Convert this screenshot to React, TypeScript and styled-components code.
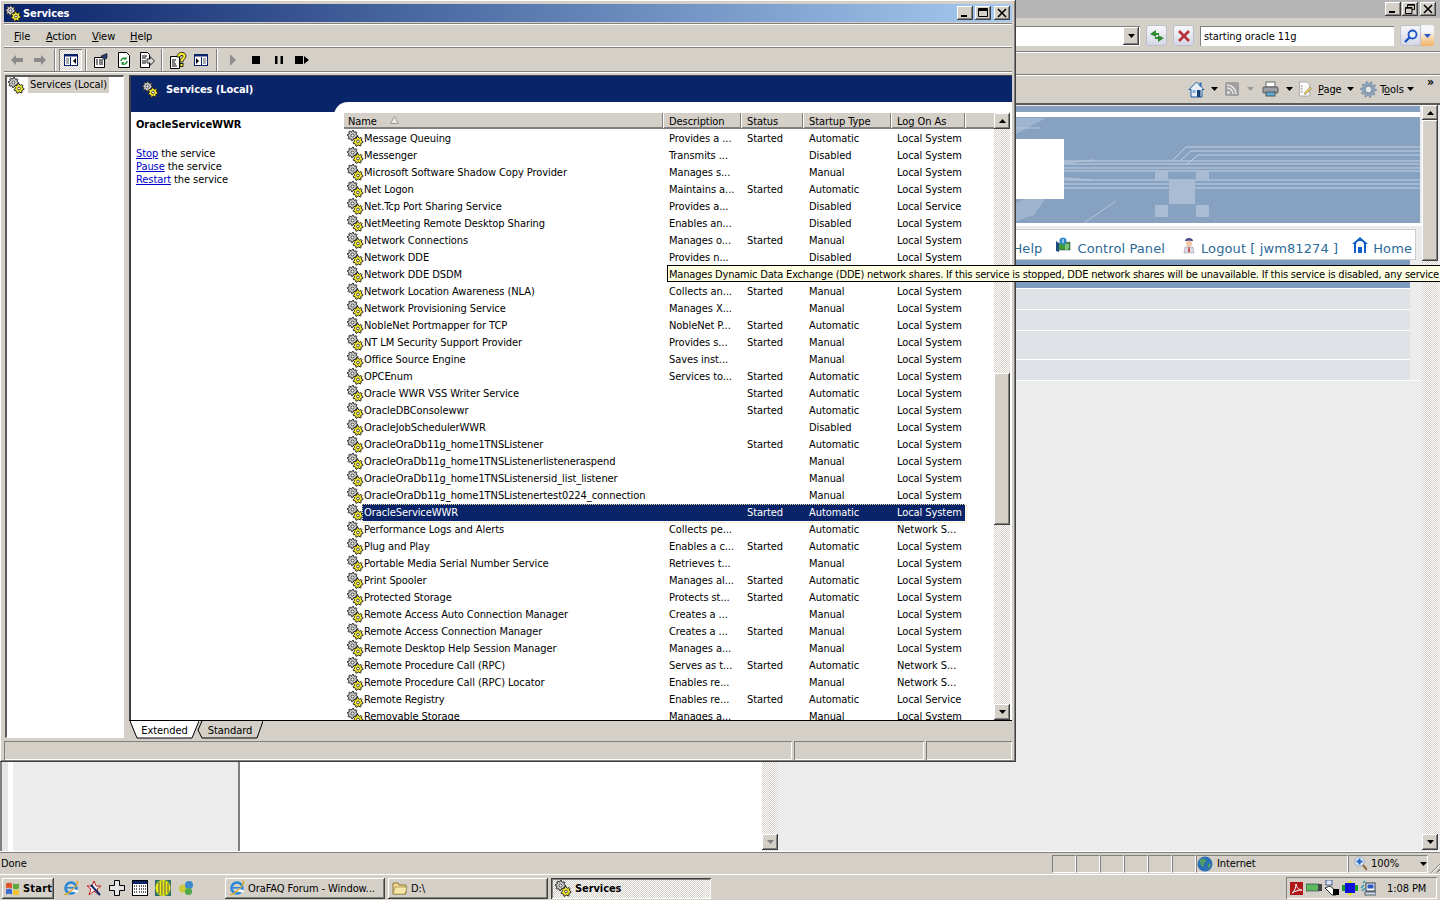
import React from 'react';
import styled, { createGlobalStyle, css } from 'styled-components';

const Global = createGlobalStyle`
  html, body { margin: 0; padding: 0; width: 1440px; height: 900px; overflow: hidden; background: #d4d0c8; }
  * { box-sizing: border-box; }
  #root { width: 1440px; height: 900px; }
`;

const raised = css`
  background-color: #d4d0c8;
  box-shadow: inset -1px -1px #404040, inset 1px 1px #fff, inset -2px -2px #808080, inset 2px 2px #d4d0c8;
`;
const sunken = css`
  box-shadow: inset 1px 1px #808080, inset -1px -1px #fff;
`;
const hatch = css`
  background: repeating-conic-gradient(#fff 0 25%, #d4d0c8 0 50%) 0 0 / 2px 2px;
`;

const Desktop = styled.div`
  position: relative;
  width: 1440px;
  height: 900px;
  overflow: hidden;
  display: flex;
  flex-direction: column;
  background: #d4d0c8;
  color: #000;
  font: 11px/13px "DejaVu Sans Condensed", "Noto Sans", sans-serif;
  letter-spacing: -0.08px;
`;

/* ---------- Background browser window ---------- */
const Browser = styled.div`
  flex: 1;
  min-height: 0;
  display: flex;
  flex-direction: column;
`;
const BrowserTitle = styled.div`
  height: 18px;
  flex: none;
  background: #b5b5b5;
  display: flex;
  justify-content: flex-end;
  align-items: center;
  gap: 1px;
  padding: 0 4px 1px 0;
`;
const CaptionButton = styled.div<{ $gap?: number }>`
  ${raised}
  width: 16px;
  height: 14px;
  margin-left: ${p => p.$gap ?? 0}px;
  display: flex;
  align-items: center;
  justify-content: center;
  flex: none;
`;
const AddressRow = styled.div`
  height: 34px;
  flex: none;
  display: flex;
  align-items: center;
  padding: 2px 6px 0 0;
  border-bottom: 1px solid #808080;
  box-shadow: 0 1px #fff;
`;
const AddressCombo = styled.div`
  flex: 1;
  height: 20px;
  background: #fff;
  display: flex;
  justify-content: flex-end;
  align-items: center;
  padding-right: 1px;
  ${sunken}
`;
const ComboButton = styled.div`
  ${raised}
  width: 16px;
  height: 18px;
  display: flex;
  align-items: center;
  justify-content: center;
`;
const RoundTool = styled.div`
  width: 21px;
  height: 21px;
  margin-left: 6px;
  border-radius: 3px;
  border: 1px solid #bcc0cc;
  background: linear-gradient(#f6f7fa, #d5d8e4);
  display: flex;
  align-items: center;
  justify-content: center;
  flex: none;
`;
const SearchBox = styled.div`
  width: 194px;
  height: 20px;
  margin-left: 6px;
  margin-right: 6px;
  background: #fff;
  padding: 4px 4px;
  ${sunken}
`;
const SearchArrow = styled.div`
  width: 13px;
  height: 21px;
  background: linear-gradient(#f6f7fa 30%, #f3b25e);
  display: flex;
  align-items: center;
  justify-content: center;
  border-radius: 0 3px 3px 0;
`;
const SearchGo = styled(RoundTool)`
  margin-left: 0;
  border-radius: 3px 0 0 3px;
`;
const MenuStrip = styled.div`
  height: 23px;
  flex: none;
  border-bottom: 1px solid #808080;
  box-shadow: 0 1px #fff;
`;
const CommandRow = styled.div`
  height: 30px;
  flex: none;
  display: flex;
  justify-content: flex-end;
  align-items: center;
  padding: 0 5px 0 0;
  border-bottom: 2px solid #5a5a5a;
`;
const CommandItem = styled.div<{ $w: number; $gap?: number }>`
  width: ${p => p.$w}px;
  display: flex;
  align-items: center;
  gap: ${p => p.$gap ?? 5}px;
  flex: none;
`;
const CmdText = styled.span`
  & u { text-decoration: underline; }
`;
const Chevrons = styled.div`
  width: 17px;
  padding-left: 9px;
  align-self: flex-start;
  font-weight: 700;
  font-size: 12px;
  line-height: 14px;
`;
const BrowserContent = styled.div`
  flex: 1;
  min-height: 0;
  display: flex;
  background: #ececec;
`;
const Page = styled.div`
  flex: 1;
  min-width: 0;
  display: flex;
  flex-direction: column;
  padding-top: 1px;
  background: #ececec;
`;
const Banner = styled.div`
  height: 117px;
  flex: none;
  border-bottom: 3px solid #fff;
  box-sizing: content-box;
  line-height: 0;
`;
const NavPanel = styled.div`
  margin: 3px 6px 0 0;
  height: 31px;
  flex: none;
  background: #fff;
  border: 1px solid #ccc;
  display: flex;
  justify-content: flex-end;
  align-items: center;
  padding: 9px 3px 0 0;
  font: 13px/16px "DejaVu Sans", Verdana, sans-serif;
  color: #2c6a98;
  letter-spacing: 0.1px;
`;
const NavLink = styled.div<{ $gap: number }>`
  display: flex;
  align-items: center;
  gap: 5px;
  margin-left: ${p => p.$gap}px;
  white-space: nowrap;
  & svg { margin-top: -8px; }
`;
const Band = styled.div`
  height: 28px;
  flex: none;
  margin: 0 12px 0 0;
  background: #7f9cc0;
`;
const Stripe = styled.div<{ $h: number }>`
  height: ${p => p.$h}px;
  flex: none;
  margin: 0 12px 0 0;
  background: #dee1e5;
  border-top: 1px solid #fff;
`;
const Lower = styled.div`
  flex: 1;
  min-height: 0;
  display: flex;
  border-top: 1px solid #fff;
`;
const LowerGutter = styled.div`
  width: 13px;
  flex: none;
  background: linear-gradient(90deg, #808080 0 2px, #e6e6e6 2px 8px, #fff 8px);
`;
const LowerSide = styled.div`
  width: 225px;
  flex: none;
  background: #ececec;
  border-right: 2px solid #808080;
  box-sizing: content-box;
`;
const LowerMain = styled.div`
  width: 538px;
  flex: none;
  display: flex;
  background: #fff;
`;
const LowerBlank = styled.div`
  flex: 1;
`;
const ScrollColumn = styled.div<{ $w: number }>`
  width: ${p => p.$w}px;
  flex: none;
  display: flex;
  flex-direction: column;
`;
const ScrollGap = styled.div<{ $h?: number }>`
  ${hatch}
  ${p => (p.$h ? `height:${p.$h}px; flex:none;` : 'flex:1;')}
`;
const ScrollButton = styled.div<{ $h?: number }>`
  ${raised}
  height: ${p => p.$h ?? 16}px;
  flex: none;
  display: flex;
  align-items: center;
  justify-content: center;
`;
const ScrollThumb = styled.div<{ $h: number }>`
  ${raised}
  height: ${p => p.$h}px;
  flex: none;
`;
const RightEdge = styled.div`
  width: 2px;
  flex: none;
  background: #ececec;
`;
const BrowserStatus = styled.div`
  height: 22px;
  flex: none;
  display: flex;
  align-items: center;
  padding: 0 0 0 1px;
  border-top: 1px solid #808080;
  box-shadow: 0 -1px #fff, 0 1px #fff;
`;
const StatusDone = styled.div`
  flex: 1;
`;
const StatusCell = styled.div<{ $w: number }>`
  width: ${p => p.$w}px;
  height: 18px;
  flex: none;
  display: flex;
  align-items: center;
  gap: 4px;
  border-left: 1px solid #808080;
  border-top: 1px solid #808080;
  border-right: 1px solid #fff;
  border-bottom: 1px solid #fff;
  white-space: nowrap;
`;
const ZoomCell = styled(StatusCell)`
  padding-left: 5px;
`;
const ZoomValue = styled.span`
  width: 46px;
`;
const Grip = styled.div`
  width: 12px;
  height: 12px;
  flex: none;
  margin-top: 6px;
  background: repeating-linear-gradient(135deg, transparent 0 2px, #808080 2px 3px, #fff 3px 4px);
  clip-path: polygon(100% 0, 100% 100%, 0 100%);
`;

/* ---------- Task bar ---------- */
const TaskBar = styled.div`
  height: 26px;
  flex: none;
  display: flex;
  align-items: center;
  padding: 1px 3px 0 2px;
  border-top: 1px solid #fff;
`;
const StartButton = styled.div`
  ${raised}
  width: 52px;
  height: 21px;
  flex: none;
  display: flex;
  align-items: center;
  gap: 3px;
  padding-left: 3px;
  font-weight: 700;
  font-size: 11px;
  letter-spacing: 0.2px;
`;
const QuickLaunch = styled.div`
  display: flex;
  align-items: center;
  gap: 7px;
  margin-left: 9px;
  width: 162px;
  flex: none;
`;
const TaskButton = styled.div<{ $active?: boolean; $w: number }>`
  width: ${p => p.$w}px;
  height: 21px;
  flex: none;
  margin-right: 3px;
  display: flex;
  align-items: center;
  gap: 3px;
  padding-left: 4px;
  white-space: nowrap;
  overflow: hidden;
  ${p =>
    p.$active
      ? css`
          ${hatch}
          font-weight: 700;
          box-shadow: inset 1px 1px #404040, inset -1px -1px #fff, inset 2px 2px #808080;
        `
      : raised}
`;
const TaskSpacer = styled.div`
  flex: 1;
`;
const Tray = styled.div`
  width: 151px;
  height: 22px;
  flex: none;
  display: flex;
  align-items: center;
  gap: 2px;
  padding-left: 4px;
  ${sunken}
`;
const Clock = styled.div`
  margin-left: 9px;
  white-space: nowrap;
`;

/* ---------- Services window ---------- */
const Win = styled.div`
  position: absolute;
  left: 0;
  top: 0;
  width: 1016px;
  height: 762px;
  z-index: 2;
  display: flex;
  flex-direction: column;
  padding: 4px 4px 2px 4px;
  background: #d4d0c8;
  box-shadow: inset -1px -1px #404040, inset 1px 1px #fff, inset -2px -2px #808080;
`;
const WinTitle = styled.div`
  height: 18px;
  flex: none;
  background: linear-gradient(90deg, #0a246a, #a6caf0);
  color: #fff;
  font-weight: 700;
  display: flex;
  align-items: center;
  gap: 1px;
  padding: 0 2px 0 1px;
`;
const WinTitleText = styled.div`
  flex: 1;
`;
const WinMenu = styled.div`
  height: 25px;
  flex: none;
  margin-top: 1px;
  display: flex;
  align-items: center;
  gap: 13px;
  padding: 1px 0 0 10px;
  border-top: 1px solid #808080;
  border-bottom: 1px solid #808080;
  box-shadow: inset 0 1px #fff, inset 0 -1px #fff;
`;
const MenuItem = styled.div<{ $w: number }>`
  width: ${p => p.$w}px;
  & u { text-decoration: underline; }
`;
const WinTools = styled.div`
  height: 24px;
  flex: none;
  display: flex;
  align-items: center;
  padding-left: 1px;
  border-bottom: 1px solid #808080;
  box-shadow: 0 1px #fff;
`;
const ToolButton = styled.div<{ $pressed?: boolean }>`
  width: 23px;
  height: 22px;
  flex: none;
  display: flex;
  align-items: center;
  justify-content: center;
  ${p =>
    p.$pressed &&
    css`
      ${hatch}
      box-shadow: inset 1px 1px #808080, inset -1px -1px #fff;
    `}
`;
const ToolSep = styled.div<{ $w?: number }>`
  width: ${p => p.$w ?? 8}px;
  height: 22px;
  flex: none;
  display: flex;
  justify-content: center;
  &::before {
    content: '';
    width: 2px;
    background: linear-gradient(90deg, #808080 50%, #fff 50%);
  }
`;
const WinBody = styled.div`
  flex: 1;
  min-height: 0;
  display: flex;
  gap: 5px;
  padding: 3px 0 1px 1px;
`;
const TreePane = styled.div`
  width: 119px;
  flex: none;
  background: #fff;
  margin-bottom: 2px;
  border-top: 2px solid #5a5a5a;
  border-left: 2px solid #5a5a5a;
  border-right: 1px solid #fff;
  border-bottom: 1px solid #fff;
  padding: 0 1px;
`;
const TreeItem = styled.div`
  display: flex;
  align-items: center;
  height: 16px;
`;
const TreeLabel = styled.span`
  background: #d4d0c8;
  padding: 0 2px;
  margin-left: 3px;
  line-height: 16px;
  white-space: nowrap;
`;
const RightPane = styled.div`
  flex: 1;
  min-width: 0;
  display: flex;
  flex-direction: column;
  background: #fff;
`;
const ViewArea = styled.div`
  flex: 1;
  min-height: 0;
  display: flex;
  flex-direction: column;
  border-top: 1px solid #404040;
  border-left: 2px solid #404040;
`;
const ViewHeading = styled.div`
  height: 36px;
  flex: none;
  background: #0a246a;
  color: #fff;
  font-weight: 700;
  font-size: 11px;
  line-height: 17px;
  display: flex;
  align-items: flex-start;
  gap: 7px;
  padding: 5px 0 0 11px;
`;
const ViewColumns = styled.div`
  flex: 1;
  min-height: 0;
  display: flex;
`;
const DetailPane = styled.div`
  width: 203px;
  flex: none;
  padding: 6px 5px 0;
`;
const DetailName = styled.div`
  font-weight: 700;
  font-size: 11px;
  margin-bottom: 16px;
`;
const DetailLine = styled.div`
  height: 13px;
`;
const DetailLink = styled.a`
  color: #0000cc;
  text-decoration: underline;
`;
const ListPane = styled.div`
  flex: 1;
  min-width: 0;
  position: relative;
  margin-top: -10px;
  border-radius: 14px 0 0 0;
  background: #fff;
  display: flex;
  padding: 11px 2px 0 10px;
`;
const ListMain = styled.div`
  flex: 1;
  min-width: 0;
  display: flex;
  flex-direction: column;
`;
const columns = css`
  display: grid;
  grid-template-columns: 319px 78px 62px 88px 74px;
`;
const ListHeader = styled.div`
  ${columns}
  height: 16px;
  flex: none;
  background: #d4d0c8;
  border-bottom: 2px solid #808080;
`;
const HeadCell = styled.div`
  padding: 2px 0 0 6px;
  position: relative;
  white-space: nowrap;
  border-right: 1px solid #808080;
  box-shadow: 1px 0 #fff;
`;
const NameHead = styled(HeadCell)`
  padding-left: 4px;
  display: flex;
  align-items: flex-start;
  gap: 13px;
`;
const SortMark = styled.svg`
  margin-top: 1px;
`;
const ListRows = styled.div`
  flex: 1;
  min-height: 0;
  overflow: hidden;
  padding-top: 1px;
`;
const Row = styled.div<{ $selected?: boolean }>`
  ${columns}
  position: relative;
  height: 17px;
  align-items: center;
  ${p =>
    p.$selected &&
    css`
      &::after {
        content: '';
        position: absolute;
        left: 18px;
        top: 0;
        width: 603px;
        height: 17px;
        border: 1px dotted #e6d89a;
      }
    `}
`;
const NameCell = styled.div`
  display: flex;
  align-items: center;
  padding-left: 3px;
  white-space: nowrap;
  height: 17px;
  & svg { margin-right: -2px; }
`;
const NameText = styled.span<{ $selected?: boolean }>`
  flex: 1;
  height: 17px;
  line-height: 17px;
  padding-left: 2px;
  ${p => p.$selected && 'background:#0a246a;color:#fff;'}
`;
const Cell = styled.div<{ $selected?: boolean }>`
  padding-left: 6px;
  height: 17px;
  line-height: 17px;
  white-space: nowrap;
  overflow: hidden;
  ${p => p.$selected && 'background:#0a246a;color:#fff;'}
`;
const TabStrip = styled.div`
  height: 20px;
  flex: none;
  background: #d4d0c8;
  border-top: 1px solid #000;
  display: flex;
  padding-left: 1px;
`;
const Tab = styled.div<{ $w: number; $shift?: number }>`
  position: relative;
  width: ${p => p.$w}px;
  height: 18px;
  flex: none;
  margin-left: ${p => p.$shift ?? 0}px;
  text-align: center;
  line-height: 19px;
`;
const TabShape = styled.svg`
  position: absolute;
  inset: 0;
`;
const TabLabel = styled.span`
  position: relative;
`;
const WinStatus = styled.div`
  height: 19px;
  flex: none;
  display: flex;
  gap: 2px;
`;
const WinStatusCell = styled.div<{ $w?: number }>`
  ${p => (p.$w ? `width:${p.$w}px;flex:none;` : 'flex:1;')}
  ${sunken}
`;
const Tip = styled.div`
  position: absolute;
  left: 667px;
  top: 265px;
  height: 17px;
  z-index: 5;
  width: 800px;
  padding: 2px 1px 0;
  background: #ffffe1;
  border: 1px solid #000;
  white-space: nowrap;
  line-height: 13px;
  letter-spacing: -0.195px;
`;

/* ---------- Icons ---------- */
const gear = (cx: number, cy: number, r: number, teeth: number) => {
  const pts: string[] = [];
  const n = teeth * 4;
  for (let i = 0; i < n; i++) {
    const a = (i / n) * Math.PI * 2;
    const rr = i % 4 < 2 ? r : r * 0.72;
    pts.push(`${(cx + rr * Math.cos(a)).toFixed(2)},${(cy + rr * Math.sin(a)).toFixed(2)}`);
  }
  return pts.join(' ');
};
const GearIcon = () => (
  <svg width="17" height="17" viewBox="0 0 17 17" style={{ flex: 'none' }}>
    <polygon points={gear(5.5, 5.5, 5.2, 8)} fill="#d0d0d0" stroke="#222" strokeWidth="1" />
    <circle cx="5.5" cy="5.5" r="1.5" fill="#fff" stroke="#222" strokeWidth=".8" />
    <polygon points={gear(11, 11.5, 5, 7)} fill="#f6ea2c" stroke="#222" strokeWidth="1" />
    <circle cx="11" cy="11.5" r="1.4" fill="#fff" stroke="#222" strokeWidth=".8" />
  </svg>
);
const IEIcon = ({ s = 16 }: { s?: number }) => (
  <svg width={s} height={s} viewBox="0 0 16 16" style={{ flex: 'none' }}>
    <circle cx="8" cy="8" r="5.5" fill="none" stroke="#2a86d8" strokeWidth="2.6" />
    <rect x="4" y="7" width="8.5" height="1.6" fill="#2a86d8" />
    <rect x="10" y="9.2" width="5" height="2.6" fill="#fff" transform="rotate(10 10 9)" />
    <path d="M1 14c1 2 7-2 11-7s3-6 1-6" fill="none" stroke="#e0a820" strokeWidth="1.2" />
  </svg>
);
const Caret = ({ dir = 'down', c = '#000' }: { dir?: 'up' | 'down'; c?: string }) => (
  <svg width="7" height="4" viewBox="0 0 7 4" style={{ flex: 'none' }}>
    <path d={dir === 'down' ? 'M0 0h7L3.5 4z' : 'M0 4h7L3.5 0z'} fill={c} />
  </svg>
);
const Min = () => (
  <svg width="10" height="10" viewBox="0 0 10 10"><rect x="1" y="7" width="6" height="2" /></svg>
);
const Max = () => (
  <svg width="10" height="10" viewBox="0 0 10 10"><path d="M.5 1.5h9v7h-9zM.5 .5h9v2h-9z" fill="none" stroke="#000" /></svg>
);
const Restore = () => (
  <svg width="10" height="10" viewBox="0 0 10 10"><path d="M2.5 3V.5h7v5H7M.5 3.5h6.5v6H.5z M2.5 1.2h7M.5 4.2h6.5" fill="none" stroke="#000" /></svg>
);
const Close = () => (
  <svg width="10" height="10" viewBox="0 0 10 10"><path d="M1 1l8 8M9 1l-8 8" stroke="#000" strokeWidth="1.6" /></svg>
);
const ArrowTool = ({ flip }: { flip?: boolean }) => (
  <svg width="14" height="12" viewBox="0 0 14 12" style={flip ? { transform: 'scaleX(-1)' } : undefined}>
    <path d="M1 6l5-5v3h7v4H6v3z" fill="#8a8a8a" />
  </svg>
);
const TreeToggleIcon = () => (
  <svg width="14" height="12" viewBox="0 0 14 12">
    <rect x=".5" y=".5" width="13" height="11" fill="#fff" stroke="#0a246a" />
    <rect x=".5" y=".5" width="13" height="2" fill="#0a246a" />
    <path d="M6.5 3v8" stroke="#0a246a" />
    <path d="M2 5h3M2 7h3M2 9h3" stroke="#555" />
    <path d="M12 4v6L9 7z" fill="#000" />
  </svg>
);
const PropsIcon = () => (
  <svg width="16" height="16" viewBox="0 0 16 16">
    <path d="M1.5 5.5h10v10h-10z" fill="#fff" stroke="#000" />
    <path d="M3 8h2M6 8h4M3 10h2M6 10h4M3 12h2M6 12h4" stroke="#000" />
    <path d="M8 4l6-2.5V6l-3 2-1-2z" fill="#26406e" stroke="#000" strokeWidth=".6" />
  </svg>
);
const RefreshIcon = () => (
  <svg width="14" height="16" viewBox="0 0 14 16">
    <path d="M1.5 .5h8l3 3v12h-11z" fill="#fff" stroke="#000" />
    <path d="M4 9a3 3 0 0 1 5-2M10 9a3 3 0 0 1-5 2.4" fill="none" stroke="#1a8a2a" strokeWidth="1.4" />
    <path d="M9.5 4.5v3h-3zM4.5 13v-3h3z" fill="#1a8a2a" />
  </svg>
);
const ExportIcon = () => (
  <svg width="16" height="16" viewBox="0 0 16 16">
    <path d="M1.5 .5h7l2 2v13h-9z" fill="#fff" stroke="#000" />
    <path d="M3 4h5M3 6h4M3 9h4M3 11h4" stroke="#000" />
    <path d="M8 7h3V4.5L15.5 9 11 13.5V11H8z" fill="#d8d8d8" stroke="#000" strokeWidth=".8" />
  </svg>
);
const HelpIcon = () => (
  <svg width="18" height="18" viewBox="0 0 18 18">
    <path d="M1.5 5.5h9v12h-9z" fill="#fff" stroke="#000" />
    <path d="M3 9h4M3 11h3M3 13h4M3 15h5" stroke="#000" />
    <path d="M8 6c0-6 9-6 9-1 0 3-3 3-3 6h-3c0-4 3-4 3-6 0-1-3-1-3 1z" fill="#f6e93a" stroke="#000" strokeWidth=".8" />
    <rect x="11" y="12.5" width="3" height="3" fill="#f6e93a" stroke="#000" strokeWidth=".8" />
  </svg>
);
const ActionPaneIcon = () => (
  <svg width="14" height="12" viewBox="0 0 14 12">
    <rect x=".5" y=".5" width="13" height="11" fill="#fff" stroke="#0a246a" />
    <rect x=".5" y=".5" width="13" height="2" fill="#0a246a" />
    <path d="M7.5 3v8" stroke="#0a246a" />
    <path d="M9 5h3M9 7h3M9 9h3" stroke="#555" />
    <path d="M2 4v6l3-3z" fill="#000" />
  </svg>
);
const PlayIcon = () => <svg width="8" height="12" viewBox="0 0 8 12"><path d="M1 0l6 6-6 6z" fill="#8f8f8f" /></svg>;
const StopIcon = () => <svg width="10" height="10" viewBox="0 0 10 10"><rect x="1" y="1" width="8" height="8" /></svg>;
const PauseIcon = () => <svg width="10" height="10" viewBox="0 0 10 10"><path d="M1 1h2.5v8H1zM6.5 1H9v8H6.5z" /></svg>;
const ResumeIcon = () => <svg width="14" height="10" viewBox="0 0 14 10"><path d="M0 1h8v8H0zM9 1l5 4-5 4z" /></svg>;
const RefreshGreen = () => (
  <svg width="16" height="14" viewBox="0 0 16 14">
    <path d="M7 1L1 5l6 3V6h3V4H7z" fill="#2f8a33" />
    <path d="M9 13l6-4-6-3v2H6v2h3z" fill="#2f8a33" />
  </svg>
);
const RedX = () => (
  <svg width="14" height="14" viewBox="0 0 14 14"><path d="M2 2l10 10M12 2L2 12" stroke="#b8303a" strokeWidth="2.6" /></svg>
);
const Magnifier = () => (
  <svg width="14" height="14" viewBox="0 0 14 14">
    <circle cx="8.5" cy="5.5" r="4" fill="#e8f0fa" stroke="#1c53c4" strokeWidth="1.8" />
    <path d="M5.5 8.5L1 13" stroke="#1c53c4" strokeWidth="2.4" />
  </svg>
);
const HomeIcon = () => (
  <svg width="17" height="17" viewBox="0 0 17 17" style={{ flex: 'none' }}>
    <path d="M8.5 1L1 8.5h2V16h11V8.5h2z" fill="#e8eef5" stroke="#1f5c9e" />
    <rect x="9" y="9" width="3.5" height="7" fill="#123f7a" />
    <rect x="4.5" y="9" width="3" height="3" fill="#7fb3dd" />
    <rect x="11.5" y="1.5" width="2" height="4" fill="#2d6cb0" />
  </svg>
);
const FeedIcon = () => (
  <svg width="14" height="14" viewBox="0 0 14 14" style={{ flex: 'none' }}>
    <rect width="14" height="14" rx="1.5" fill="#a0a0a0" />
    <circle cx="3.5" cy="10.5" r="1.5" fill="#e6e6e6" />
    <path d="M2 6a6 6 0 0 1 6 6M2 3a9 9 0 0 1 9 9" fill="none" stroke="#e6e6e6" strokeWidth="1.6" />
  </svg>
);
const PrintIcon = () => (
  <svg width="17" height="16" viewBox="0 0 17 16" style={{ flex: 'none' }}>
    <rect x="4" y="1" width="9" height="5" fill="#fff" stroke="#666" />
    <rect x="1" y="6" width="15" height="6" rx="1" fill="#9a9ea6" stroke="#555" />
    <rect x="4" y="11" width="9" height="4" fill="#5ab0d8" stroke="#555" />
  </svg>
);
const PageIcon = () => (
  <svg width="15" height="16" viewBox="0 0 16 16" style={{ flex: 'none' }}>
    <path d="M1.5 .5h8l3 3v12h-11z" fill="#fbfbfb" stroke="#a8a8a8" />
    <path d="M3 5h2M3 8h2M3 11h2" stroke="#7a7a7a" />
    <path d="M7 12l6-6 1.5 1.5-6 6H7z" fill="#e4c66a" stroke="#8a7a40" strokeWidth=".6" />
  </svg>
);
const ToolsGear = () => (
  <svg width="17" height="17" viewBox="0 0 17 17" style={{ flex: 'none' }}>
    <polygon points={gear(8.5, 8.5, 8, 10)} fill="#8fa6bf" stroke="#6b7f94" strokeWidth=".6" />
    <circle cx="8.5" cy="8.5" r="3.5" fill="#e4e7ea" stroke="#6b7f94" />
  </svg>
);
const PanelIcon = () => (
  <svg width="17" height="17" viewBox="0 0 17 17">
    <path d="M2 7l13-2v8H2z" fill="#3f9a3c" stroke="#234" strokeWidth=".5" />
    <path d="M1 4v10l3 1V6z" fill="#1f4f80" />
    <circle cx="8" cy="4" r="3.6" fill="#2f86c8" />
    <path d="M8 2v4" stroke="#fff" />
    <path d="M10 8h4M10 10h4M10 12h3" stroke="#c8e8c0" />
  </svg>
);
const UserIcon = () => (
  <svg width="14" height="17" viewBox="0 0 14 17">
    <path d="M3 4c0-4 8-4 8 0z" fill="#4a4a8a" />
    <circle cx="7" cy="6.5" r="3" fill="#f2c8a8" />
    <path d="M2 16l1-6h8l1 6z" fill="#dcdce8" stroke="#8a8a9a" strokeWidth=".5" />
    <path d="M6.4 10h1.2L8 15H6z" fill="#c84040" />
  </svg>
);
const NavHome = () => (
  <svg width="16" height="16" viewBox="0 0 16 16">
    <path d="M8 0L0 7h2v9h12V7h2z" fill="#0f62c6" />
    <path d="M4 8a4 4 0 0 1 8 0v8H4z" fill="#fff" />
    <rect x="6" y="10" width="4" height="6" fill="#0f62c6" />
  </svg>
);
const Globe = () => (
  <svg width="16" height="16" viewBox="0 0 16 16" style={{ flex: 'none' }}>
    <circle cx="8" cy="8" r="7.5" fill="#2a6fb5" />
    <path d="M4 3c3-1 5 0 5 2S6 7 7 9s-2 2-3 0-2-5 0-6zM11 8c2-1 3 0 3 1s-2 4-3 3 0-3 0-4z" fill="#4f9a6a" />
  </svg>
);
const Zoom = () => (
  <svg width="13" height="15" viewBox="0 0 13 15" style={{ flex: 'none' }}>
    <circle cx="5.5" cy="5.5" r="4.8" fill="#dfe9f7" stroke="#9ab" />
    <path d="M5.5 2.5v6M2.5 5.5h6" stroke="#1c63c4" strokeWidth="2" />
    <path d="M9 9l4 5" stroke="#8a5a2a" strokeWidth="2" />
  </svg>
);
const WinFlag = () => (
  <svg width="15" height="15" viewBox="0 0 15 15" style={{ flex: 'none' }}>
    <path d="M1 2.5c2-1 4-1 6 0v5c-2-1-4-1-6 0z" fill="#e0552a" />
    <path d="M8 2.5c2 1 4 1 6 0v5c-2 1-4 1-6 0z" fill="#5aa83a" />
    <path d="M1 8.5c2-1 4-1 6 0v5c-2-1-4-1-6 0z" fill="#3c6cd0" />
    <path d="M8 8.5c2 1 4 1 6 0v5c-2 1-4 1-6 0z" fill="#f2c52e" />
  </svg>
);
const QuickTool = () => (
  <svg width="16" height="16" viewBox="0 0 16 16">
    <path d="M8 1l2 5h5l-4 3 2 6-5-4-5 4 2-6-4-3h5z" fill="#fff" stroke="#c02020" />
    <path d="M5 5l9 10" stroke="#102a6a" strokeWidth="2" />
  </svg>
);
const QuickCross = () => (
  <svg width="16" height="16" viewBox="0 0 16 16">
    <path d="M5.5.5h5v5h5v5h-5v5h-5v-5h-5v-5h5z" fill="#e4e4e4" stroke="#000" />
  </svg>
);
const QuickGrid = () => (
  <svg width="16" height="16" viewBox="0 0 16 16">
    <rect x=".5" y=".5" width="15" height="15" fill="#fff" stroke="#000" />
    <rect x="1" y="1" width="14" height="3" fill="#0a246a" />
    <path d="M2 6h3M2 9h3M2 12h3M7 6h7M7 9h7M7 12h7" stroke="#333" strokeWidth="1.4" strokeDasharray="1 1" />
  </svg>
);
const QuickCoin = () => (
  <svg width="16" height="16" viewBox="0 0 16 16">
    <rect width="16" height="16" fill="#2f6f6a" />
    <ellipse cx="8" cy="8" rx="7.5" ry="8" fill="#eaea10" />
    <path d="M4 2v12M7 1v14M10 1v14M13 3v10" stroke="#555" />
  </svg>
);
const QuickOrbs = () => (
  <svg width="16" height="16" viewBox="0 0 16 16">
    <circle cx="5" cy="8.5" r="4" fill="#c9c93a" />
    <circle cx="11" cy="5" r="4" fill="#3c8ad0" />
    <circle cx="10.5" cy="11.5" r="3.6" fill="#4fa84a" />
  </svg>
);
const Folder = () => (
  <svg width="16" height="16" viewBox="0 0 16 16" style={{ flex: 'none' }}>
    <path d="M1 3h5l1 2h7v9H1z" fill="#f2d68a" stroke="#8a7a40" />
    <path d="M3 7h12l-2 7H1z" fill="#f8e6a8" stroke="#8a7a40" strokeWidth=".6" />
  </svg>
);
const Adobe = () => (
  <svg width="14" height="14" viewBox="0 0 14 14" style={{ flex: 'none' }}>
    <rect width="13" height="13" y="1" fill="#b01818" />
    <path d="M2 12c3-2 4-6 4-9 0 3 3 6 6 6-3 0-7 1-10 3z" fill="none" stroke="#fff" />
  </svg>
);
const NetCard = () => (
  <svg width="16" height="10" viewBox="0 0 16 10" style={{ flex: 'none' }}>
    <rect y="1" width="13" height="7" fill="#5cb85c" stroke="#234" strokeWidth=".6" />
    <rect x="12" y="1" width="4" height="7" fill="#444" />
  </svg>
);
const TrayPeople = () => (
  <svg width="16" height="16" viewBox="0 0 16 16" style={{ flex: 'none' }}>
    <rect x="2" y="0" width="6" height="5" fill="#dfe6f5" stroke="#23407e" strokeWidth=".8" />
    <path d="M1 8l5-2 6 5v4H8z" fill="#fff" stroke="#000" strokeWidth=".8" />
    <rect x="9" y="9" width="6" height="6" fill="#000" />
  </svg>
);
const TrayCross = () => (
  <svg width="16" height="16" viewBox="0 0 16 16" style={{ flex: 'none' }}>
    <path d="M8 0l3 3H5zM8 16l3-3H5zM0 8l3-3v6zM16 8l-3-3v6z" fill="#e6e628" />
    <rect x="3" y="3" width="10" height="10" fill="#1010d8" />
    <path d="M0 5h3v6H0zM13 5h3v6h-3z" fill="#1c9a30" />
  </svg>
);
const TrayPc = () => (
  <svg width="16" height="16" viewBox="0 0 16 16" style={{ flex: 'none' }}>
    <rect x="6" y="3" width="9" height="8" fill="#fff" stroke="#234" />
    <rect x="7.5" y="4.5" width="6" height="4" fill="#2a56c0" />
    <rect x="5" y="12" width="11" height="3" fill="#cfd8e8" stroke="#234" strokeWidth=".7" />
    <path d="M1 8l3-3M2 11l3-3M3 3l2-2" stroke="#3a9ab0" strokeWidth="1.6" />
  </svg>
);
const BannerArt = () => (
  <svg width="1420" height="117" viewBox="0 108 1420 117">
    <rect x="0" y="108" width="1420" height="117" fill="#87a1c1" />
    <rect x="0" y="114" width="1420" height="5" fill="#fff" />
    <path d="M1016 163H1420M1016 166H1420M1016 170H1420M1016 173H1420M1016 182H1420M1016 186H1420M1016 190H1420" stroke="#c2d0e1" strokeWidth="1" />
    <path d="M1172 163l14-14H1420M1180 163l11-10H1420M1186 167l12-10H1420" stroke="#c2d0e1" strokeWidth="1" fill="none" />
    <path d="M1016 120h30l-30 16zM1016 205l40-20-22 32-18 6z" fill="#a9bcd3" opacity=".7" />
    <path d="M1016 130H1040M1064 165l30-3M1064 180l28 2M1084 225l32-22" stroke="#b6c6da" />
    <g fill="#a9bcd4">
      <rect x="1155" y="172" width="13" height="11" />
      <rect x="1196" y="172" width="13" height="11" />
      <rect x="1169" y="182" width="26" height="24" />
      <rect x="1155" y="207" width="13" height="12" />
      <rect x="1196" y="207" width="13" height="12" />
    </g>
    <rect x="1016" y="141" width="48" height="60" fill="#fff" />
  </svg>
);

type Svc = [string, string, string, string, string];
const LS = 'Local System';
const services: Svc[] = [
  ['Message Queuing', 'Provides a ...', 'Started', 'Automatic', LS],
  ['Messenger', 'Transmits ...', '', 'Disabled', LS],
  ['Microsoft Software Shadow Copy Provider', 'Manages s...', '', 'Manual', LS],
  ['Net Logon', 'Maintains a...', 'Started', 'Automatic', LS],
  ['Net.Tcp Port Sharing Service', 'Provides a...', '', 'Disabled', 'Local Service'],
  ['NetMeeting Remote Desktop Sharing', 'Enables an...', '', 'Disabled', LS],
  ['Network Connections', 'Manages o...', 'Started', 'Manual', LS],
  ['Network DDE', 'Provides n...', '', 'Disabled', LS],
  ['Network DDE DSDM', '', '', '', ''],
  ['Network Location Awareness (NLA)', 'Collects an...', 'Started', 'Manual', LS],
  ['Network Provisioning Service', 'Manages X...', '', 'Manual', LS],
  ['NobleNet Portmapper for TCP', 'NobleNet P...', 'Started', 'Automatic', LS],
  ['NT LM Security Support Provider', 'Provides s...', 'Started', 'Manual', LS],
  ['Office Source Engine', 'Saves inst...', '', 'Manual', LS],
  ['OPCEnum', 'Services to...', 'Started', 'Automatic', LS],
  ['Oracle WWR VSS Writer Service', '', 'Started', 'Automatic', LS],
  ['OracleDBConsolewwr', '', 'Started', 'Automatic', LS],
  ['OracleJobSchedulerWWR', '', '', 'Disabled', LS],
  ['OracleOraDb11g_home1TNSListener', '', 'Started', 'Automatic', LS],
  ['OracleOraDb11g_home1TNSListenerlisteneraspend', '', '', 'Manual', LS],
  ['OracleOraDb11g_home1TNSListenersid_list_listener', '', '', 'Manual', LS],
  ['OracleOraDb11g_home1TNSListenertest0224_connection', '', '', 'Manual', LS],
  ['OracleServiceWWR', '', 'Started', 'Automatic', LS],
  ['Performance Logs and Alerts', 'Collects pe...', '', 'Automatic', 'Network S...'],
  ['Plug and Play', 'Enables a c...', 'Started', 'Automatic', LS],
  ['Portable Media Serial Number Service', 'Retrieves t...', '', 'Manual', LS],
  ['Print Spooler', 'Manages al...', 'Started', 'Automatic', LS],
  ['Protected Storage', 'Protects st...', 'Started', 'Automatic', LS],
  ['Remote Access Auto Connection Manager', 'Creates a ...', '', 'Manual', LS],
  ['Remote Access Connection Manager', 'Creates a ...', 'Started', 'Manual', LS],
  ['Remote Desktop Help Session Manager', 'Manages a...', '', 'Manual', LS],
  ['Remote Procedure Call (RPC)', 'Serves as t...', 'Started', 'Automatic', 'Network S...'],
  ['Remote Procedure Call (RPC) Locator', 'Enables re...', '', 'Manual', 'Network S...'],
  ['Remote Registry', 'Enables re...', 'Started', 'Automatic', 'Local Service'],
  ['Removable Storage', 'Manages a...', '', 'Manual', LS],
];

export default function App() {
  return (
    <Desktop>
      <Global />
      <Browser>
        <BrowserTitle>
          <CaptionButton><Min /></CaptionButton>
          <CaptionButton><Restore /></CaptionButton>
          <CaptionButton $gap={1}><Close /></CaptionButton>
        </BrowserTitle>
        <AddressRow>
          <AddressCombo>
            <ComboButton><Caret /></ComboButton>
          </AddressCombo>
          <RoundTool><RefreshGreen /></RoundTool>
          <RoundTool><RedX /></RoundTool>
          <SearchBox>starting oracle 11g</SearchBox>
          <SearchGo><Magnifier /></SearchGo>
          <SearchArrow><Caret c="#2a56c0" /></SearchArrow>
        </AddressRow>
        <MenuStrip />
        <CommandRow>
          <CommandItem $w={37} $gap={6}><HomeIcon /><Caret /></CommandItem>
          <CommandItem $w={37} $gap={8}><FeedIcon /><Caret c="#999" /></CommandItem>
          <CommandItem $w={36} $gap={7}><PrintIcon /><Caret /></CommandItem>
          <CommandItem $w={62} $gap={5}><PageIcon /><CmdText><u>P</u>age</CmdText><Caret /></CommandItem>
          <CommandItem $w={58} $gap={3}><ToolsGear /><CmdText>T<u>o</u>ols</CmdText><Caret /></CommandItem>
          <Chevrons>»</Chevrons>
        </CommandRow>
        <BrowserContent>
          <Page>
            <Banner><BannerArt /></Banner>
            <NavPanel>
              <NavLink $gap={0}>Help</NavLink>
              <NavLink $gap={13}><PanelIcon />Control Panel</NavLink>
              <NavLink $gap={17}><UserIcon />Logout [ jwm81274 ]</NavLink>
              <NavLink $gap={14}><NavHome />Home</NavLink>
            </NavPanel>
            <Band />
            <Stripe $h={21} />
            <Stripe $h={21} />
            <Stripe $h={29} />
            <Stripe $h={21} />
            <Lower>
              <LowerGutter />
              <LowerSide />
              <LowerMain>
                <LowerBlank />
                <ScrollColumn $w={16}>
                  <ScrollGap />
                  <ScrollButton><Caret c="#808080" /></ScrollButton>
                  <ScrollGap $h={2} />
                </ScrollColumn>
              </LowerMain>
              <LowerBlank />
            </Lower>
          </Page>
          <ScrollColumn $w={16}>
            <ScrollButton $h={15}><Caret dir="up" /></ScrollButton>
            <ScrollThumb $h={141} />
            <ScrollGap />
            <ScrollButton><Caret /></ScrollButton>
            <ScrollGap $h={2} />
          </ScrollColumn>
          <RightEdge />
        </BrowserContent>
        <BrowserStatus>
          <StatusDone>Done</StatusDone>
          <StatusCell $w={24} />
          <StatusCell $w={24} />
          <StatusCell $w={24} />
          <StatusCell $w={24} />
          <StatusCell $w={24} />
          <StatusCell $w={24} />
          <StatusCell $w={152}><Globe />Internet</StatusCell>
          <ZoomCell $w={80}><Zoom /><ZoomValue>100%</ZoomValue><Caret /></ZoomCell>
          <Grip />
        </BrowserStatus>
      </Browser>
      <TaskBar>
        <StartButton><WinFlag />Start</StartButton>
        <QuickLaunch>
          <IEIcon /><QuickTool /><QuickCross /><QuickGrid /><QuickCoin /><QuickOrbs />
        </QuickLaunch>
        <TaskButton $w={160}><IEIcon />OraFAQ Forum - Window...</TaskButton>
        <TaskButton $w={160}><Folder />D:\</TaskButton>
        <TaskButton $w={160} $active><GearIcon />Services</TaskButton>
        <TaskSpacer />
        <Tray>
          <Adobe /><NetCard /><TrayPeople /><TrayCross /><TrayPc />
          <Clock>1:08 PM</Clock>
        </Tray>
      </TaskBar>

      <Win>
        <WinTitle>
          <GearIcon />
          <WinTitleText>Services</WinTitleText>
          <CaptionButton><Min /></CaptionButton>
          <CaptionButton $gap={1}><Max /></CaptionButton>
          <CaptionButton $gap={2}><Close /></CaptionButton>
        </WinTitle>
        <WinMenu>
          <MenuItem $w={19}><u>F</u>ile</MenuItem>
          <MenuItem $w={33}><u>A</u>ction</MenuItem>
          <MenuItem $w={25}><u>V</u>iew</MenuItem>
          <MenuItem $w={24}><u>H</u>elp</MenuItem>
        </WinMenu>
        <WinTools>
          <ToolButton><ArrowTool /></ToolButton>
          <ToolButton><ArrowTool flip /></ToolButton>
          <ToolSep />
          <ToolButton $pressed><TreeToggleIcon /></ToolButton>
          <ToolSep $w={7} />
          <ToolButton><PropsIcon /></ToolButton>
          <ToolButton><RefreshIcon /></ToolButton>
          <ToolButton><ExportIcon /></ToolButton>
          <ToolSep />
          <ToolButton><HelpIcon /></ToolButton>
          <ToolButton><ActionPaneIcon /></ToolButton>
          <ToolSep $w={9} />
          <ToolButton><PlayIcon /></ToolButton>
          <ToolButton><StopIcon /></ToolButton>
          <ToolButton><PauseIcon /></ToolButton>
          <ToolButton><ResumeIcon /></ToolButton>
        </WinTools>
        <WinBody>
          <TreePane>
            <TreeItem><GearIcon /><TreeLabel>Services (Local)</TreeLabel></TreeItem>
          </TreePane>
          <RightPane>
            <ViewArea>
              <ViewHeading><GearIcon />Services (Local)</ViewHeading>
              <ViewColumns>
                <DetailPane>
                  <DetailName>OracleServiceWWR</DetailName>
                  <DetailLine><DetailLink>Stop</DetailLink> the service</DetailLine>
                  <DetailLine><DetailLink>Pause</DetailLink> the service</DetailLine>
                  <DetailLine><DetailLink>Restart</DetailLink> the service</DetailLine>
                </DetailPane>
                <ListPane>
                  <ListMain>
                    <ListHeader>
                      <NameHead>Name<SortMark width="9" height="8" viewBox="0 0 9 8"><path d="M4.5 .5L8.5 7.5H.5z" fill="#ece9e2" stroke="#999" /></SortMark></NameHead>
                      <HeadCell>Description</HeadCell>
                      <HeadCell>Status</HeadCell>
                      <HeadCell>Startup Type</HeadCell>
                      <HeadCell>Log On As</HeadCell>
                    </ListHeader>
                    <ListRows>
                      {services.map(([n, d, s, t, l]) => {
                        const sel = n === 'OracleServiceWWR';
                        return (
                          <Row key={n} $selected={sel}>
                            <NameCell><GearIcon /><NameText $selected={sel}>{n}</NameText></NameCell>
                            <Cell $selected={sel}>{d}</Cell>
                            <Cell $selected={sel}>{s}</Cell>
                            <Cell $selected={sel}>{t}</Cell>
                            <Cell $selected={sel}>{l}</Cell>
                          </Row>
                        );
                      })}
                    </ListRows>
                  </ListMain>
                  <ScrollColumn $w={16}>
                    <ScrollButton><Caret dir="up" /></ScrollButton>
                    <ScrollGap $h={244} />
                    <ScrollThumb $h={152} />
                    <ScrollGap />
                    <ScrollButton><Caret /></ScrollButton>
                  </ScrollColumn>
                </ListPane>
              </ViewColumns>
            </ViewArea>
            <TabStrip>
              <Tab $w={69}>
                <TabShape width="69" height="18" viewBox="0 0 69 18"><path d="M0 0L7 17H62L69 0" fill="#fff" stroke="#000" /></TabShape>
                <TabLabel>Extended</TabLabel>
              </Tab>
              <Tab $w={66} $shift={-2}>
                <TabShape width="66" height="18" viewBox="0 0 66 18"><path d="M5 0L1 9L5 17H60L66 0" fill="#d4d0c8" stroke="#000" /></TabShape>
                <TabLabel>Standard</TabLabel>
              </Tab>
            </TabStrip>
          </RightPane>
        </WinBody>
        <WinStatus>
          <WinStatusCell $w={788} />
          <WinStatusCell $w={130} />
          <WinStatusCell />
        </WinStatus>
      </Win>

      <Tip>Manages Dynamic Data Exchange (DDE) network shares. If this service is stopped, DDE network shares will be unavailable. If this service is disabled, any service</Tip>
    </Desktop>
  );
}
